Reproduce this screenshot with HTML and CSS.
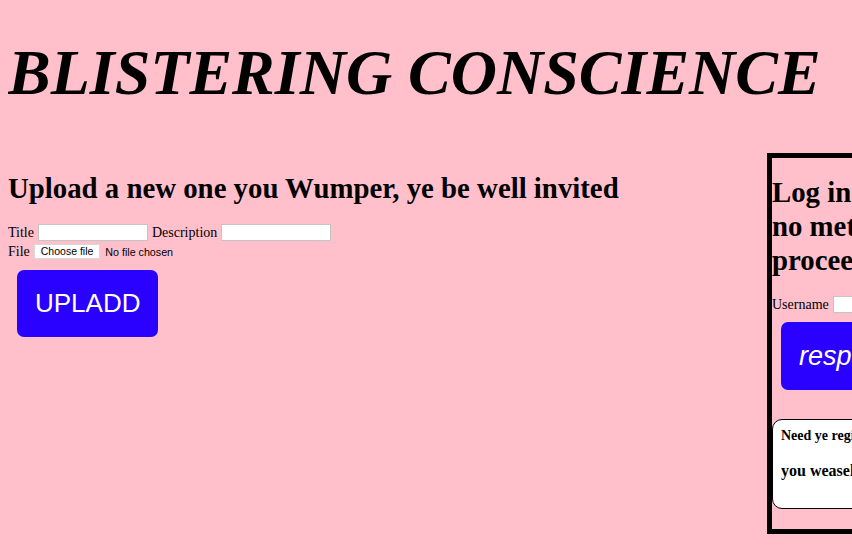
FILE: index.html
```html
<!DOCTYPE html>
<html>
<head>
<meta charset="utf-8">
<link rel="stylesheet" href="styles.css">
</head>
<body>
<h1 class="title">BLISTERING CONSCIENCE</h1>
<div class="main">
  <section class="upload">
    <h2 class="heading">Upload a new one you Wumper, ye be well invited</h2>
    <form class="upload-form">
      <div class="row">
        <label class="lbl">Title</label>
        <input class="field" type="text">
        <label class="lbl">Description</label>
        <input class="field" type="text">
      </div>
      <div class="row">
        <label class="lbl">File</label>
        <span class="file-btn">Choose file</span>
        <span class="file-status">No file chosen</span>
      </div>
      <button class="big-btn" type="button">UPLADD</button>
    </form>
  </section>
  <aside class="login">
    <div class="login-inner">
      <h2 class="heading">Log in ye Wumper, there be<br>no method by which ye may<br>proceed otherwise</h2>
      <form class="login-form">
        <div class="row">
          <label class="lbl">Username</label>
          <input class="field" type="text">
        </div>
        <button class="big-btn italic" type="button">respawn</button>
      </form>
      <div class="register">
        <p class="reg-q">Need ye register an account?</p>
        <p class="reg-a">you weasel, go then</p>
      </div>
    </div>
  </aside>
</div>
</body>
</html>
```
FILE: styles.css
```css
body {
  margin: 8px 0 8px 8px;
  background: pink;
  font-family: "Liberation Serif", "Times New Roman", serif;
  font-size: 16px;
  color: #000;
  overflow: hidden;
}
.title {
  font-size: 64px;
  font-style: italic;
  font-weight: bold;
  margin: 28px 0 43px;
  line-height: 74px;
  white-space: nowrap;
}
.main {
  display: grid;
  grid-template-columns: 759px 1fr;
  align-items: start;
}
.heading {
  font-size: 28.8px;
  font-weight: bold;
  margin: 18px 0;
  line-height: 34px;
}
.upload-form { margin: 0; }
.login-form { margin: 0; }
.row {
  display: flex;
  align-items: center;
  gap: 4px;
  height: 19px;
}
.lbl {
  font-size: 14px;
  line-height: 19px;
}
.field {
  width: 110px;
  height: 17px;
  box-sizing: border-box;
  border: 1px solid #c4c4c4;
  background: #fff;
  padding: 0 2px;
  margin: 0;
}
.file-btn {
  font-family: "Liberation Sans", Arial, sans-serif;
  font-size: 10.5px;
  background: #fff;
  border: 1px solid #d8d8d8;
  border-radius: 1px;
  padding: 0 6px;
  height: 15px;
  line-height: 13px;
  box-sizing: border-box;
  white-space: nowrap;
}
.file-status {
  font-family: "Liberation Sans", Arial, sans-serif;
  font-size: 10.7px;
  margin-left: 1px;
  white-space: nowrap;
}
.big-btn {
  display: block;
  margin: 9px 9px 0;
  background: #2a00ff;
  color: #fff;
  border: none;
  border-radius: 7px;
  font-family: "Liberation Sans", Arial, sans-serif;
  font-size: 26px;
  padding: 18px 18px;
  line-height: 31px;
}
.big-btn.italic {
  font-style: italic;
  font-size: 27px;
  margin-top: 8px;
  line-height: 32px;
  padding-right: 30px;
}
.login {
  border: 5px solid #000;
  border-right: 0;
  overflow: hidden;
}
.login-inner {
  width: 380px;
  padding-bottom: 20px;
}
.login .heading { margin-top: 17px; }
.register {
  margin-top: 29px;
  background: #fff;
  border: 1px solid #000;
  border-radius: 10px;
  padding: 8px 8px 28px;
}
.reg-q {
  font-size: 14px;
  font-weight: bold;
  margin: 0;
  line-height: 15px;
  white-space: nowrap;
}
.reg-a {
  font-size: 16px;
  font-weight: bold;
  margin: 19px 0 0;
  line-height: 18px;
  white-space: nowrap;
}
```
